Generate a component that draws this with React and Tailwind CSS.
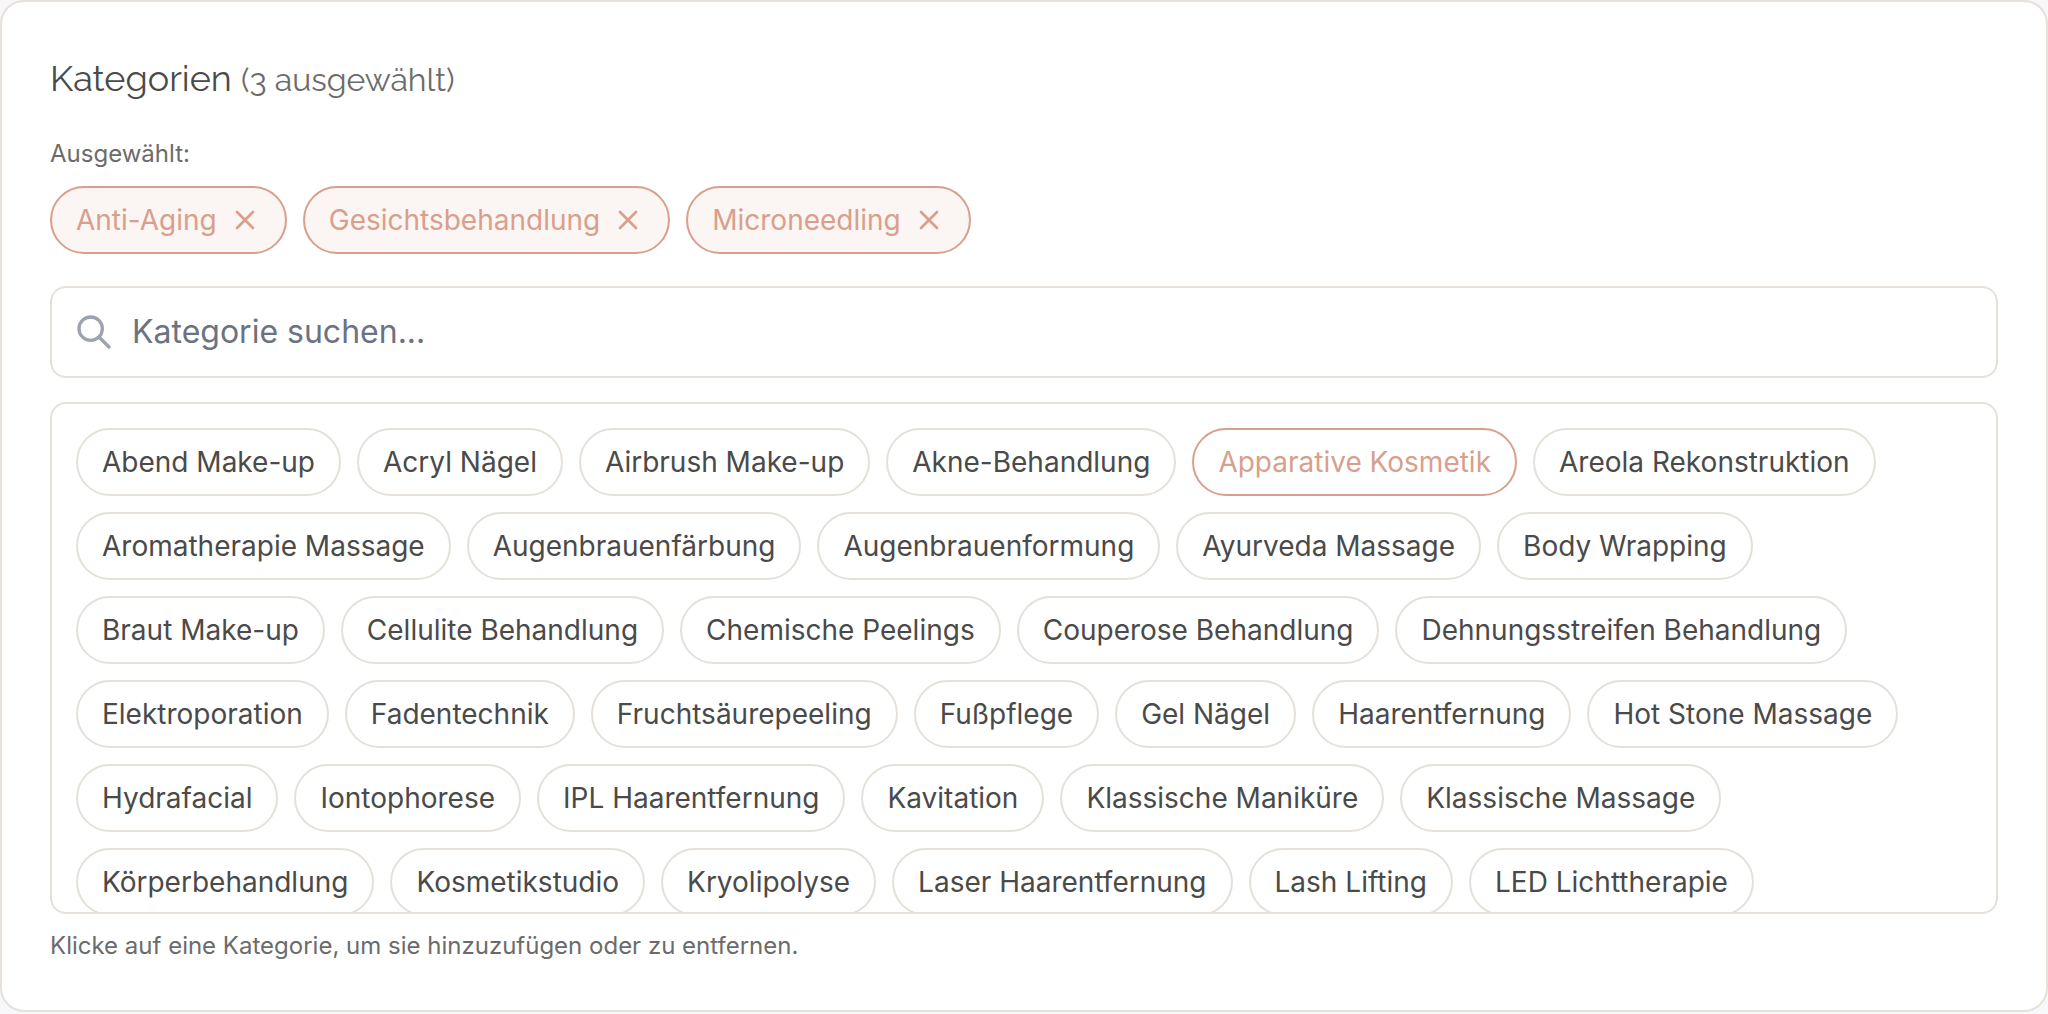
import React, { useState } from 'react';

const CATEGORIES = [
  'Abend Make-up',
  'Acryl Nägel',
  'Airbrush Make-up',
  'Akne-Behandlung',
  'Anti-Aging',
  'Apparative Kosmetik',
  'Areola Rekonstruktion',
  'Aromatherapie Massage',
  'Augenbrauenfärbung',
  'Augenbrauenformung',
  'Ayurveda Massage',
  'Body Wrapping',
  'Braut Make-up',
  'Cellulite Behandlung',
  'Chemische Peelings',
  'Couperose Behandlung',
  'Dehnungsstreifen Behandlung',
  'Elektroporation',
  'Fadentechnik',
  'Fruchtsäurepeeling',
  'Fußpflege',
  'Gel Nägel',
  'Gesichtsbehandlung',
  'Haarentfernung',
  'Hot Stone Massage',
  'Hydrafacial',
  'Iontophorese',
  'IPL Haarentfernung',
  'Kavitation',
  'Klassische Maniküre',
  'Klassische Massage',
  'Körperbehandlung',
  'Kosmetikstudio',
  'Kryolipolyse',
  'Laser Haarentfernung',
  'Lash Lifting',
  'LED Lichttherapie',
  'Microneedling',
];

const App = () => {
  const [selected, setSelected] = useState(['Anti-Aging', 'Gesichtsbehandlung', 'Microneedling']);
  const [active, setActive] = useState('Apparative Kosmetik');
  const [search, setSearch] = useState('');

  const toggle = (name) => {
    setSelected(prev => prev.includes(name) ? prev.filter(c => c !== name) : [...prev, name]);
  };

  const available = CATEGORIES.filter(
    c => !selected.includes(c) && c.toLowerCase().includes(search.toLowerCase())
  );

  return (
    <div className="min-h-screen bg-[#f8f7fa] font-['Inter',sans-serif] text-[#4a4a4a]">
      <section className="bg-white border-2 border-[#e5e0da] rounded-3xl p-12">
        <h2 className="mb-8 text-[36px] leading-14 font-normal font-['Raleway','Inter',sans-serif]">
          Kategorien <span className="text-[32px] leading-none text-[#6b6b6b]">({selected.length} ausgewählt)</span>
        </h2>

        {selected.length > 0 && (
          <div className="mb-8">
            <p className="mb-4 text-2xl text-[#6b6b6b]">Ausgewählt:</p>
            <div className="flex flex-wrap gap-4">
              {selected.map(name => (
                <button
                  key={name}
                  type="button"
                  onClick={() => toggle(name)}
                  className="flex items-center gap-3 px-6 py-3 rounded-full border-2 border-[#d8a08c] bg-[#fbf5f3] text-[28px] leading-10 text-[#d8a08c]"
                >
                  {name}
                  <svg className="size-8" fill="none" stroke="currentColor" viewBox="0 0 24 24" aria-hidden="true">
                    <path strokeLinecap="round" strokeLinejoin="round" strokeWidth={2} d="M6 18L18 6M6 6l12 12" />
                  </svg>
                </button>
              ))}
            </div>
          </div>
        )}

        <div className="relative mb-6">
          <svg className="absolute left-6 top-1/2 -translate-y-1/2 size-10 text-[#9ca3af]" fill="none" stroke="currentColor" viewBox="0 0 24 24" aria-hidden="true">
            <path strokeLinecap="round" strokeLinejoin="round" strokeWidth={2} d="M21 21l-6-6m2-5a7 7 0 11-14 0 7 7 0 0114 0z" />
          </svg>
          <input
            type="text"
            aria-label="Kategorie suchen"
            value={search}
            onChange={e => setSearch(e.target.value)}
            placeholder="Kategorie suchen..."
            className="block w-full pl-20 pr-6 py-5 rounded-2xl border-2 border-[#e5e0da] text-[32px] leading-12 placeholder:text-[#6b7280] focus:outline-none focus:border-[#d8a08c]"
          />
        </div>

        <div className="max-h-128 overflow-y-auto [scrollbar-width:none] border-2 border-[#e5e0da] rounded-2xl p-6">
          <div className="flex flex-wrap gap-4">
            {available.map(name => (
              <button
                key={name}
                type="button"
                onClick={() => toggle(name)}
                onMouseEnter={() => setActive(name)}
                className={`px-6 py-3 rounded-full border-2 bg-white text-[28px] leading-10 ${
                  name === active ? 'border-[#d8a08c] text-[#d8a08c]' : 'border-[#e5e0da]'
                }`}
              >
                {name}
              </button>
            ))}
          </div>
        </div>

        <p className="mt-4 text-2xl text-[#6b6b6b]">
          Klicke auf eine Kategorie, um sie hinzuzufügen oder zu entfernen.
        </p>
      </section>
    </div>
  );
};

export default App;
